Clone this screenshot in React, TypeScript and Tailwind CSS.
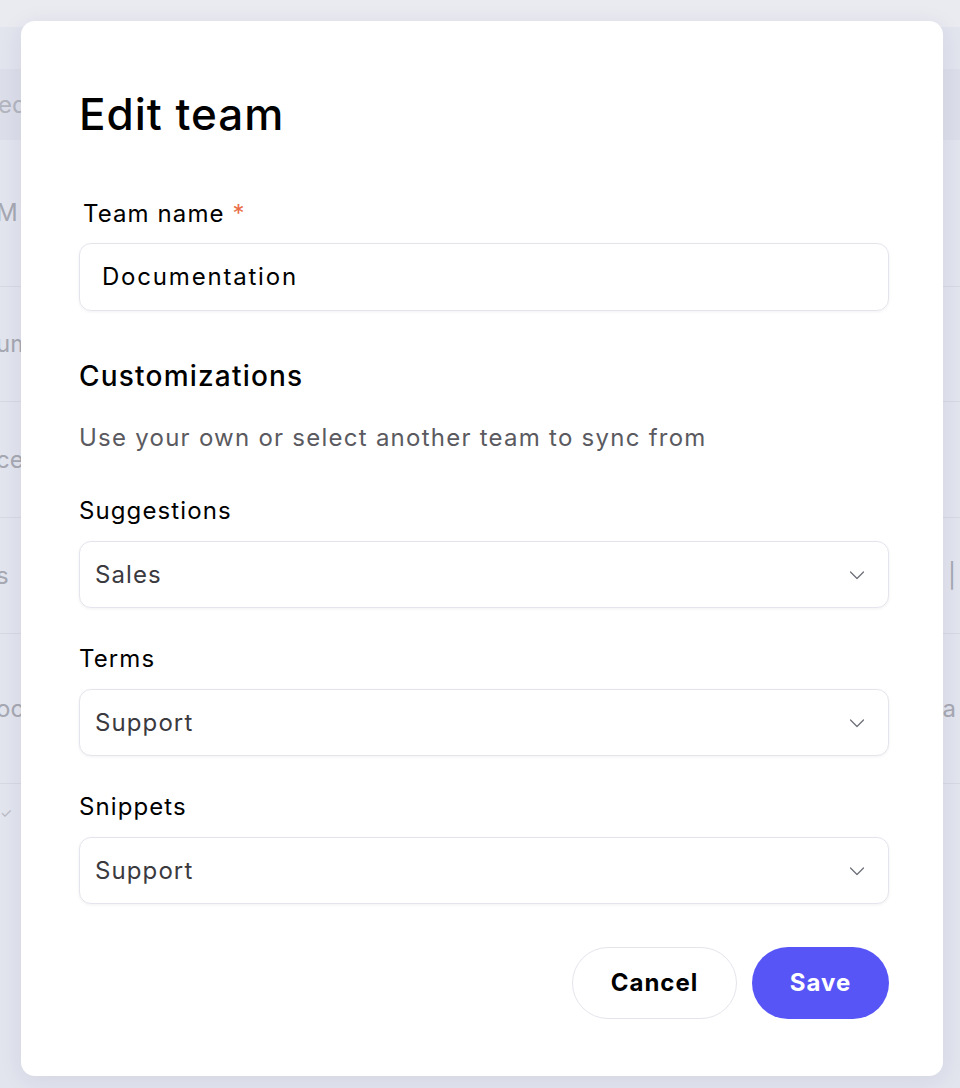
import React from 'react';

const font = { fontFamily: '"Inter", "Noto Sans", sans-serif' };

/**
 * Faded table rows that sit behind the dialog overlay
 */
const bgRows = [
  { h: 'h-[147px]', left: 'M N', right: '' },
  { h: 'h-[115px]', left: 'um', right: '' },
  { h: 'h-[116px]', left: 'ce', right: '' },
  { h: 'h-[116px]', left: 's', right: '|' },
  { h: 'h-[150px]', left: 'oo', right: 'a' },
];

const Chevron: React.FC = () => (
  <svg width="18" height="18" viewBox="0 0 18 18" fill="none" className="text-[#6b6d75]">
    <path d="M2.5 6 9 12.5 15.5 6" stroke="currentColor" strokeWidth="1.2" strokeLinecap="round" strokeLinejoin="round" />
  </svg>
);

interface SelectFieldProps {
  label: string;
  value: string;
}

const SelectField: React.FC<SelectFieldProps> = ({ label, value }) => (
  <div className="mt-[35px] first:mt-0">
    <div className="text-[24px] leading-[32px] tracking-[1.1px] text-black">{label}</div>
    <div className="mt-[14px] flex h-[67px] items-center justify-between rounded-[12px] border border-[#e4e5ec] bg-white pl-[15px] pr-[22px] shadow-[0_1px_3px_rgba(30,30,60,0.06)]">
      <span className="text-[24px] tracking-[1.1px] text-[#3a3a3f]">{value}</span>
      <Chevron />
    </div>
  </div>
);

export default function App() {
  return (
    <div className="relative h-[1088px] w-[960px] overflow-hidden bg-[#e2e4ee]" style={font}>
      {/* background page */}
      <div className="h-[27px] bg-[#eaebf1]" />
      <div className="h-[42px]" />
      <div className="flex h-[71px] items-center bg-[#dcdfea] text-[24px] text-[#b3b5bf]">
        <span className="-ml-[2px]">ed</span>
      </div>
      {bgRows.map((r, i) => (
        <div
          key={i}
          className={`${r.h} flex items-center justify-between border-b border-[#d6d8e3] text-[24px] text-[#a6a8b2]`}
        >
          <span className="-ml-[4px] whitespace-nowrap">{r.left}</span>
          <span className="pr-[4px]">{r.right}</span>
        </div>
      ))}
      <div className="flex h-[56px] items-center text-[#b9bbc5]">
        <span className="text-[14px]">✓</span>
      </div>

      {/* dialog */}
      <div className="absolute left-[21px] top-[21px] flex h-[1055px] w-[922px] flex-col rounded-[14px] bg-white pl-[58px] pr-[54px] pt-[69px] shadow-[0_4px_24px_rgba(40,40,80,0.08)]">
        <h1 className="text-[44px] font-medium leading-[48px] tracking-[1px] text-black">Edit team</h1>

        <div className="mt-[60px] pl-[4px] text-[24px] leading-[32px] tracking-[1.1px] text-black">
          Team name <span className="text-[#ea6d47]">*</span>
        </div>
        <div className="mt-[13px] flex h-[68px] items-center rounded-[12px] border border-[#e4e5ec] px-[22px] shadow-[0_1px_3px_rgba(30,30,60,0.06)]">
          <span className="text-[24px] tracking-[1.8px] text-black">Documentation</span>
        </div>

        <h2 className="mt-[48px] text-[28px] font-medium leading-[34px] tracking-[1.2px] text-black">Customizations</h2>
        <p className="mt-[29px] text-[24px] leading-[32px] tracking-[1.25px] text-[#5a5a60]">
          Use your own or select another team to sync from
        </p>

        <div className="mt-[41px]">
          <SelectField label="Suggestions" value="Sales" />
          <SelectField label="Terms" value="Support" />
          <SelectField label="Snippets" value="Support" />
        </div>

        <div className="mt-[43px] flex justify-end gap-[15px]">
          <button className="h-[72px] w-[165px] rounded-full border border-[#e4e5ec] bg-white text-[24px] font-bold tracking-[1px] text-black">
            Cancel
          </button>
          <button className="h-[72px] w-[137px] rounded-full bg-[#5855f7] text-[24px] font-bold tracking-[1px] text-white">
            Save
          </button>
        </div>
      </div>
    </div>
  );
}
